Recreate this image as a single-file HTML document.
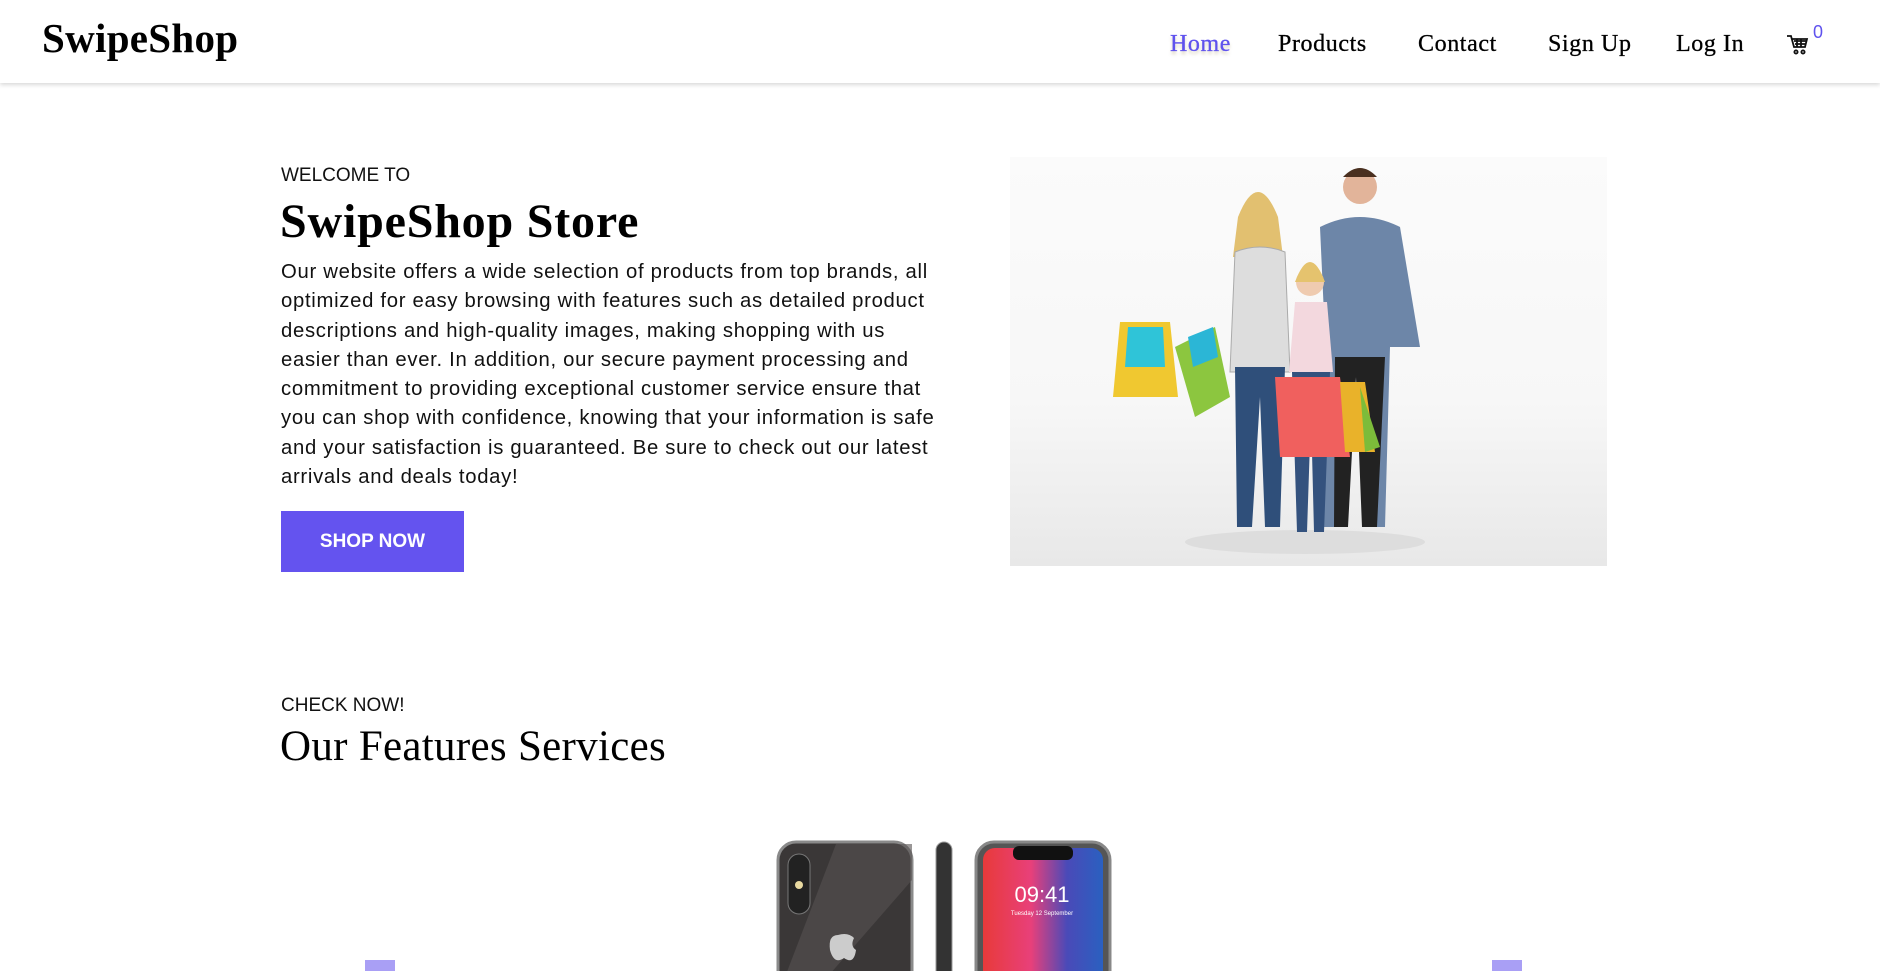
<!DOCTYPE html>
<html><head><meta charset="utf-8"><style>
*{margin:0;padding:0;box-sizing:border-box}
body{width:1880px;height:971px;overflow:hidden;background:#fff;font-family:"Liberation Sans",sans-serif;color:#111;position:relative}
.hdr{position:absolute;left:0;top:0;width:1880px;height:83px;background:#fff;box-shadow:0 2px 4px rgba(0,0,0,.15)}
.logo{position:absolute;left:42px;top:14px;font:bold 41px "Liberation Serif",serif;color:#000;letter-spacing:.3px}
.nav{position:absolute;top:31px;font:24px "Liberation Serif",serif;color:#000;letter-spacing:.6px;-webkit-text-stroke:.3px #000}
.abs{position:absolute}
.p{position:absolute;left:281px;top:258px;font-size:20.3px;line-height:29.3px;white-space:nowrap;color:#111;letter-spacing:.7px}
</style></head><body>
<div class="hdr">
<div class="logo">SwipeShop</div>
<div class="nav" style="left:1170px;color:#5f52ee;-webkit-text-stroke:.3px #5f52ee;text-shadow:0 3px 3px rgba(140,120,60,.35)">Home</div>
<div class="nav" style="left:1278px">Products</div>
<div class="nav" style="left:1418px">Contact</div>
<div class="nav" style="left:1548px">Sign Up</div>
<div class="nav" style="left:1676px">Log In</div>
<svg class="abs" style="left:1786px;top:33px" width="24" height="24" viewBox="0 0 24 24" fill="none" stroke="#111" stroke-width="1.8"><path d="M1 3h4l3 11h11l2-8H6"/><path d="M8 8h12M9 11h11M11 6v8M15 6v8"/><circle cx="10" cy="19" r="1.6"/><circle cx="17" cy="19" r="1.6"/></svg>
<div class="abs" style="left:1813px;top:22px;color:#5f52ee;font-size:18px">0</div>
</div>

<div class="abs" style="left:281px;top:165px;font-size:19px">WELCOME TO</div>
<div class="abs" style="left:280px;top:194px;font:bold 48px 'Liberation Serif',serif;color:#000;letter-spacing:.8px">SwipeShop Store</div>
<div class="p">Our website offers a wide selection of products from top brands, all<br>optimized for easy browsing with features such as detailed product<br>descriptions and high-quality images, making shopping with us<br>easier than ever. In addition, our secure payment processing and<br>commitment to providing exceptional customer service ensure that<br>you can shop with confidence, knowing that your information is safe<br>and your satisfaction is guaranteed. Be sure to check out our latest<br>arrivals and deals today!</div>
<div class="abs" style="left:281px;top:511px;width:183px;height:61px;background:#6453ef;color:#fff;font-size:19px;font-weight:bold;line-height:61px;text-align:center">SHOP NOW</div>

<div class="abs" style="left:1010px;top:157px;width:597px;height:409px;background:linear-gradient(#fbfbfb 0%,#f7f7f7 60%,#e8e8e8 100%)">
<svg width="597" height="409" viewBox="0 0 597 409">
<ellipse cx="295" cy="385" rx="120" ry="12" fill="#ddd"/>
<circle cx="350" cy="30" r="17" fill="#e2b49a"/><path d="M333 20q17-18 34 0" fill="#4a3020"/>
<path d="M310 70q40-20 80 0l20 120-30 0-5 180h-20l-10-170-15 170h-20l5-190z" fill="#6d86a8"/>
<path d="M325 200h50l-8 170h-15l-6-150-8 150h-14z" fill="#222"/>
<circle cx="248" cy="60" r="16" fill="#ecc4a8"/><path d="M228 60q20-50 40 0l5 40h-50z" fill="#e2c070"/>
<path d="M225 95q25-10 50 0l5 120h-60z" fill="#ddd" stroke="#aaa"/>
<path d="M225 210h50l-5 160h-15l-5-130-8 130h-15z" fill="#2f4f7a"/>
<circle cx="300" cy="125" r="14" fill="#efcbb0"/><path d="M285 125q15-40 30 0" fill="#e5c36e"/>
<path d="M285 145h32l6 70h-44z" fill="#f3d8de"/>
<path d="M282 215h38l-6 160h-10l-3-120-4 120h-10z" fill="#34527e"/>
<path d="M110 165h50l8 75h-65z" fill="#f0c830"/><path d="M118 170h35l2 40h-40z" fill="#2fc4d8"/>
<path d="M165 190l40-20 15 70-35 20z" fill="#8cc63f"/><path d="M178 180l25-10 5 30-25 10z" fill="#2bb6d6"/>
<path d="M265 220h65l10 80h-70z" fill="#f0605e"/><path d="M330 225h25l10 70h-30z" fill="#e9b22a"/><path d="M350 230l20 60-15 5z" fill="#7cbc3a"/>
</svg>
</div>

<div class="abs" style="left:281px;top:695px;font-size:19px">CHECK NOW!</div>
<div class="abs" style="left:280px;top:722px;font:43px 'Liberation Serif',serif;color:#000;letter-spacing:.3px">Our Features Services</div>

<svg class="abs" style="left:776px;top:840px" width="336" height="131" viewBox="0 0 336 131">
<rect x="2" y="2" width="134" height="150" rx="18" fill="#3a3737" stroke="#8a8a8a" stroke-width="3"/>
<path d="M60 4L136 4V40L40 150H4z" fill="#575252" opacity=".6"/>
<rect x="12" y="14" width="22" height="60" rx="11" fill="#222" stroke="#777"/>
<circle cx="23" cy="45" r="4" fill="#e8d9a0"/>
<path d="M62 95q-10 0-8 15q4 15 14 8q10 7 12-8q-6-4-2-12q-6-6-16-3z" fill="#ccc"/>
<rect x="160" y="2" width="16" height="150" rx="8" fill="#333" stroke="#999"/>
<rect x="200" y="2" width="134" height="150" rx="18" fill="#555" stroke="#888" stroke-width="3"/>
<defs><linearGradient id="g" x1="0" x2="1"><stop offset="0" stop-color="#e83a3a"/><stop offset=".4" stop-color="#e8407a"/><stop offset=".7" stop-color="#4a4ab8"/><stop offset="1" stop-color="#2a60c0"/></linearGradient></defs>
<rect x="207" y="8" width="120" height="140" rx="12" fill="url(#g)"/>
<rect x="237" y="6" width="60" height="14" rx="6" fill="#111"/>
<text x="266" y="62" text-anchor="middle" fill="#fff" font-size="22" font-family="Liberation Sans">09:41</text>
<text x="266" y="75" text-anchor="middle" fill="#fff" font-size="6" font-family="Liberation Sans">Tuesday 12 September</text>
</svg>
<div class="abs" style="left:365px;top:960px;width:30px;height:11px;background:#a99ff5"></div>
<div class="abs" style="left:1492px;top:960px;width:30px;height:11px;background:#a99ff5"></div>
</body></html>
